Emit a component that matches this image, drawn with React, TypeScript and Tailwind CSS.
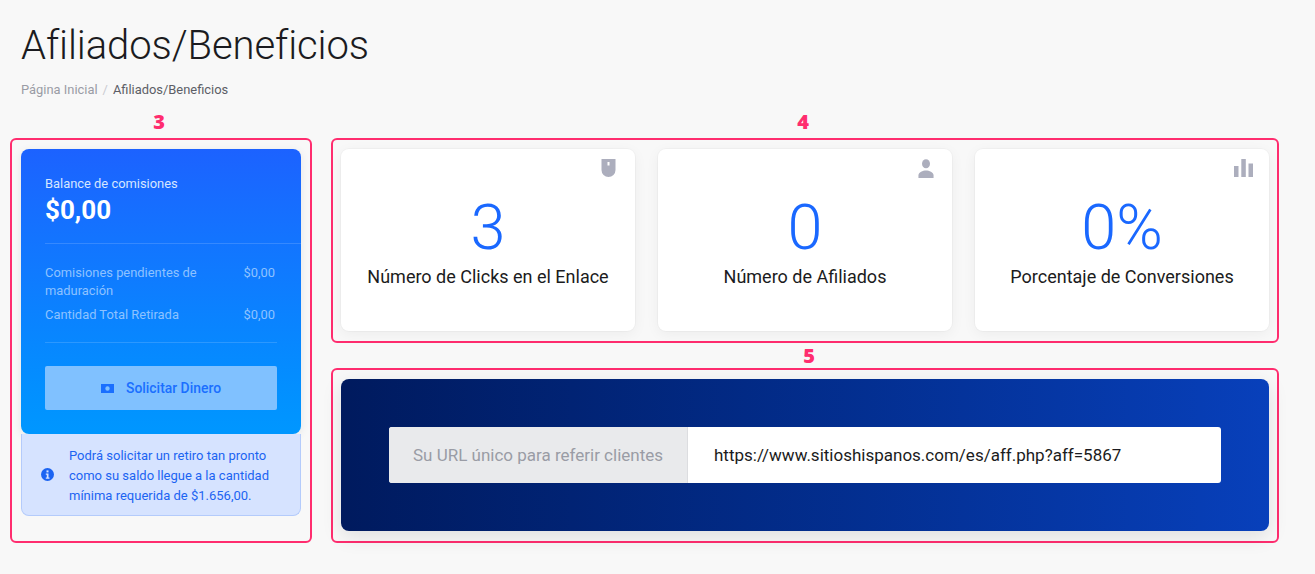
import React from 'react';

const roboto = { fontFamily: 'Roboto, sans-serif' };

const MouseIcon = () => (
  <svg width="15" height="18" viewBox="0 0 15 18" className="mr-[3px] text-[#acaebd]">
    <path fill="currentColor" d="M0.500 0h14v11a7 7 0 0 1-14 0z" />
    <rect x="6.500" y="3" width="2" height="3.500" fill="#fff" />
  </svg>
);

const PersonIcon = () => (
  <svg width="16" height="19" viewBox="0 0 18 19" preserveAspectRatio="none" className="mr-[2px] text-[#acaebd]">
    <circle cx="9" cy="4.700" r="4.500" fill="currentColor" />
    <path fill="currentColor" d="M0.500 19v-2.500C0.500 13.200 5.500 11.500 9 11.500s8.500 1.700 8.500 5V19z" />
  </svg>
);

const BarsIcon = () => (
  <svg width="19" height="19" viewBox="0 0 19 19" className="text-[#acaebd]">
    <rect x="0" y="7" width="4.500" height="11" fill="currentColor" />
    <rect x="7.300" y="0" width="4.500" height="18" fill="currentColor" />
    <rect x="14.500" y="4.500" width="4.500" height="13.500" fill="currentColor" />
  </svg>
);

const MoneyIcon = () => (
  <svg width="13" height="9" viewBox="0 0 13 9">
    <path fillRule="evenodd" fill="#1a6fff" d="M0 0h13v9H0zM6.500 2.300a2.200 2.200 0 1 0 0 4.400 2.200 2.200 0 0 0 0-4.400z" />
  </svg>
);

const InfoIcon = () => (
  <svg width="13" height="13" viewBox="0 0 13 13">
    <circle cx="6.500" cy="6.500" r="6.500" fill="#1c64f2" />
    <rect x="5.500" y="2.400" width="2" height="2" fill="#d6e3ff" />
    <path fill="#d6e3ff" d="M4.800 5.400h2.700v4h1v1.300H4.800V9.400h1V6.700h-1z" />
  </svg>
);

const Marker = ({ className, children }: { className: string; children: React.ReactNode }) => (
  <div className={`flex h-[22px] items-center justify-center text-[20px] leading-none font-extrabold text-[#ff2d6f] ${className}`} style={{ fontFamily: '"Open Sans", sans-serif' }}>
    {children}
  </div>
);

const StatCard = ({ icon, value, label }: { icon: React.ReactNode; value: string; label: string }) => (
  <div className="flex h-[182px] flex-col items-center rounded-lg bg-white shadow-[0_0_0_1px_rgba(0,0,0,0.025),0_3px_14px_rgba(0,0,0,0.05)]">
    <div className="flex h-[42px] w-full justify-end pt-[10px] pr-[16px]">{icon}</div>
    <div className="mt-[1px] h-[72px] text-[63px] leading-[72px] font-light text-[#1a68ff]">{value}</div>
    <div className="text-[18px] leading-[26px] text-[#1b1b20]">{label}</div>
  </div>
);

export default function App() {
  return (
    <div className="h-[574px] w-[1315px] overflow-hidden bg-[#f8f8f8]" style={roboto}>
      <div className="pt-[22px] pl-[21px]">
        <h1 className="text-[40px] leading-[47px] font-light tracking-[-0.1px] text-[#1b1b20]">Afiliados/Beneficios</h1>
        <div className="mt-[12px] flex items-center text-[12.9px] leading-[18px]">
          <span className="text-[#9a9ca5]">Página Inicial</span>
          <span className="mx-[5px] text-[#c9cad0]">/</span>
          <span className="text-[#5c5e66]">Afiliados/Beneficios</span>
        </div>
      </div>

      <div className="mt-[12px] flex items-start pl-[10px]">
        <div className="w-[302px]">
          <Marker className="pr-[4px]">3</Marker>
          <div className="mt-[5px] h-[405px] rounded-[6px] border-2 border-[#ff2d6f] p-[9px]">
            <div className="h-[285px] overflow-hidden rounded-lg bg-linear-to-b from-[#1c62ff] to-[#0097ff] pt-[27px] pl-[24px] shadow-[0_2px_10px_rgba(0,0,0,0.08)]">
              <div className="text-[12.9px] leading-[16px] text-[#d6e6ff]">Balance de comisiones</div>
              <div className="text-[26px] leading-[36px] font-bold text-white">$0,00</div>
              <div className="mt-[15px] h-px bg-white/15" />
              <div className="mt-[20px] flex justify-between pr-[26px] text-[12.9px] leading-[18px] text-[#8ec2ff]">
                <span className="w-[170px]">Comisiones pendientes de maduración</span>
                <span>$0,00</span>
              </div>
              <div className="mt-[6px] flex justify-between pr-[26px] text-[12.9px] leading-[18px] text-[#8ec2ff]">
                <span>Cantidad Total Retirada</span>
                <span>$0,00</span>
              </div>
              <div className="mt-[18px] mr-[24px] h-px bg-white/15" />
              <button className="mt-[23px] flex h-[44px] w-[232px] items-center justify-center gap-[12px] rounded-[2px] bg-[#80c1ff] text-[13.9px] font-medium text-[#1a6fff]">
                <MoneyIcon />
                Solicitar Dinero
              </button>
            </div>
            <div className="flex h-[82px] items-center rounded-b-lg border border-t-0 border-[#b4cbfb] bg-[#d6e3ff] pl-[19px] text-[13px] leading-[20px] text-[#1c64f2]">
              <InfoIcon />
              <p className="mt-[2px] ml-[15px] w-[212px]">Podrá solicitar un retiro tan pronto como su saldo llegue a la cantidad mínima requerida de $1.656,00.</p>
            </div>
          </div>
        </div>

        <div className="ml-[19px] w-[948px]">
          <Marker className="pr-[4px]">4</Marker>
          <div className="mt-[5px] grid h-[205px] grid-cols-3 gap-[23px] rounded-[6px] border-2 border-[#ff2d6f] px-[8px] pt-[9px]">
            <StatCard icon={<MouseIcon />} value="3" label="Número de Clicks en el Enlace" />
            <StatCard icon={<PersonIcon />} value="0" label="Número de Afiliados" />
            <StatCard icon={<BarsIcon />} value="0%" label="Porcentaje de Conversiones" />
          </div>
          <Marker className="mt-[2px] pl-[8px]">5</Marker>
          <div className="mt-[1px] h-[175px] rounded-[6px] border-2 border-[#ff2d6f] px-[8px] pt-[9px]">
            <div className="flex h-[152px] items-center justify-center rounded-lg bg-linear-to-r from-[#001a5e] to-[#0840bb] shadow-[0_6px_20px_rgba(0,0,0,0.1)]">
              <div className="flex h-[56px] w-[832px] overflow-hidden rounded-[3px] bg-white text-[17px]">
                <div className="flex w-[299px] items-center justify-center border-r border-[#dcdde0] bg-[#e9eaec] pt-[1px] text-[#9a9ca5]">Su URL único para referir clientes</div>
                <div className="flex items-center pt-[1px] pl-[26px] text-[#1b1b20]">https://www.sitioshispanos.com/es/aff.php?aff=5867</div>
              </div>
            </div>
          </div>
        </div>
      </div>
    </div>
  );
}
